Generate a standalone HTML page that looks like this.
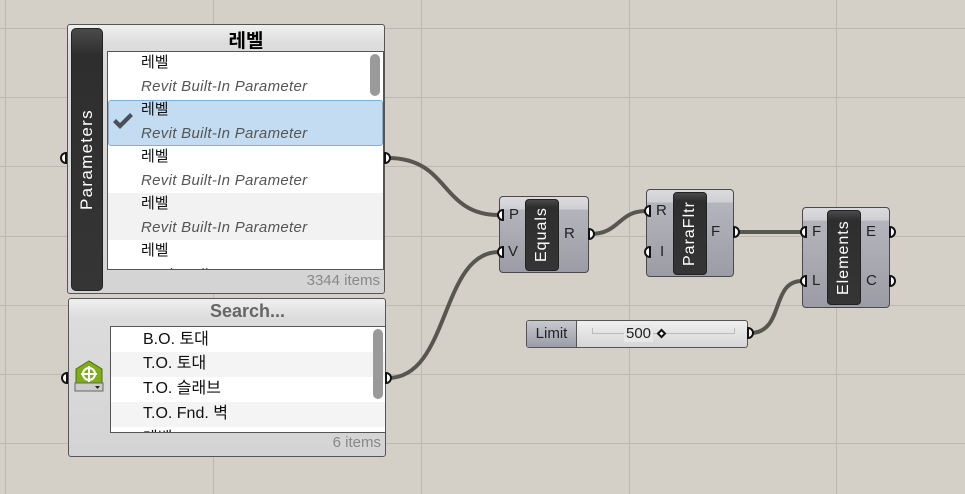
<!DOCTYPE html>
<html><head><meta charset="utf-8"><style>
*{margin:0;padding:0;box-sizing:border-box}
body{width:965px;height:494px;overflow:hidden;background:#d4d0c8;position:relative;font-family:"Liberation Sans","Noto Sans CJK KR",sans-serif}
.abs{position:absolute}
.comp{position:absolute;border:1px solid #4a4a4a;border-radius:4px;background:linear-gradient(#dcdce0 0,#d0d0d4 12px,#b4b4bc 13px,#9c9ca6 100%)}
.bar{position:absolute;background:linear-gradient(#4a4a4a,#2e2e2e 10%,#353535);border:1px solid #222;border-radius:4px}
.vt{position:absolute;left:0;top:0;width:100%;height:100%;display:flex;align-items:center;justify-content:center;writing-mode:vertical-rl;transform:rotate(180deg);color:#fff;font-size:16px;letter-spacing:1px}
.lbl{position:absolute;font-size:15px;color:#222}
.panel{position:absolute;border:1px solid #555;border-radius:3px;background:linear-gradient(#f0f0f0,#dcdcdc 20px,#d4d4d4)}
.list{position:absolute;background:#fff;border:1px solid #555;overflow:hidden}
.row{position:absolute;left:0;width:100%;font-size:15px;color:#111;line-height:24px}
.it{font-style:italic;color:#555;font-size:15px;letter-spacing:0.3px}
.sr{position:absolute;left:32px;font-size:16px;color:#111;line-height:25px}
</style></head><body>
<svg class="abs" style="left:0;top:0" width="965" height="494">
<g stroke="#bdb9b1" stroke-width="1">
<line x1="5.5" y1="0" x2="5.5" y2="494"/><line x1="213.5" y1="0" x2="213.5" y2="494"/><line x1="421.5" y1="0" x2="421.5" y2="494"/><line x1="629.5" y1="0" x2="629.5" y2="494"/><line x1="836.5" y1="0" x2="836.5" y2="494"/>
<line x1="0" y1="28.5" x2="965" y2="28.5"/><line x1="0" y1="97.5" x2="965" y2="97.5"/><line x1="0" y1="166.5" x2="965" y2="166.5"/><line x1="0" y1="236.5" x2="965" y2="236.5"/><line x1="0" y1="305.5" x2="965" y2="305.5"/><line x1="0" y1="374.5" x2="965" y2="374.5"/><line x1="0" y1="443.5" x2="965" y2="443.5"/>
</g>
<g stroke="#58574f" stroke-width="4" fill="none">
<path d="M388 158 C450 158 440 215 499 215"/>
<path d="M388 378 C450 378 440 252 499 252"/>
<path d="M590 234 C620 234 618 211 646 211"/>
<path d="M735 232 L802 232"/>
<path d="M750 333 C785 333 770 281 802 281"/>
</g>
</svg>

<div class="panel" style="left:67px;top:24px;width:318px;height:270px"></div>
<div class="bar" style="left:71px;top:28px;width:32px;height:263px;border-radius:5px"><div class="vt" style="font-size:17px;letter-spacing:1.3px">Parameters</div></div>
<div class="abs" style="left:108px;top:26px;width:276px;text-align:center;font-weight:bold;font-size:19px;color:#000">레벨</div>
<div class="list" style="left:107px;top:51px;width:277px;height:219px">
 <div class="row" style="top:0;height:47px;background:#fff"></div>
 <div class="row" style="top:48px;height:46px;background:#c3dcf1;border:1px solid #82b0d4;border-radius:3px"></div>
 <div class="row" style="top:94px;height:47px;background:#fff"></div>
 <div class="row" style="top:141px;height:47px;background:#f2f2f2"></div>
 <div class="row" style="top:188px;height:31px;background:#fff"></div>
 <div class="row" style="left:33px;top:-1px">레벨<br><span class="it">Revit Built-In Parameter</span></div>
 <div class="row" style="left:33px;top:46px">레벨<br><span class="it">Revit Built-In Parameter</span></div>
 <div class="row" style="left:33px;top:93px">레벨<br><span class="it">Revit Built-In Parameter</span></div>
 <div class="row" style="left:33px;top:140px">레벨<br><span class="it">Revit Built-In Parameter</span></div>
 <div class="row" style="left:33px;top:187px">레벨<br><span class="it">Revit Built-In Parameter</span></div>
 <div class="abs" style="left:262px;top:2px;width:10px;height:42px;background:#9a9a9a;border-radius:5px"></div>
 <svg class="abs" style="left:3px;top:60px" width="24" height="20"><path d="M2 10 L9 17 L22 4 L19 1 L9 11 L5 7 Z" fill="#4a4f58"/></svg>
</div>
<div class="abs" style="left:200px;top:272px;width:180px;text-align:right;font-size:15px;color:#888">3344 items</div>

<div class="panel" style="left:68px;top:298px;width:318px;height:159px"></div>
<div class="abs" style="left:110px;top:301px;width:275px;text-align:center;font-weight:bold;font-size:18px;color:#666">Search...</div>
<div class="list" style="left:110px;top:326px;width:276px;height:107px">
 <div class="row" style="top:25px;height:25px;background:#f4f4f4"></div>
 <div class="row" style="top:75px;height:25px;background:#f4f4f4"></div>
 <div class="sr" style="top:0px">B.O. 토대</div>
 <div class="sr" style="top:24px">T.O. 토대</div>
 <div class="sr" style="top:49px">T.O. 슬래브</div>
 <div class="sr" style="top:74px">T.O. Fnd. 벽</div>
 <div class="sr" style="top:99px">레벨</div>
 <div class="abs" style="left:262px;top:2px;width:10px;height:70px;background:#9a9a9a;border-radius:5px"></div>
</div>
<div class="abs" style="left:200px;top:434px;width:181px;text-align:right;font-size:15px;color:#888">6 items</div>
<svg class="abs" style="left:74px;top:359px" width="32" height="34">
<path d="M2 10 L15 2 L28 10 L28 24 L2 24 Z" fill="#7fae1a" stroke="#4d6e0c"/>
<circle cx="15" cy="15" r="6" fill="none" stroke="#fff" stroke-width="2"/>
<path d="M15 7 V23 M7 15 H23" stroke="#fff" stroke-width="2"/>
<rect x="1" y="24" width="28" height="8" fill="#ccc" stroke="#666"/>
<path d="M21 27 h5 l-2.5 3z" fill="#222"/>
</svg>

<div class="comp" style="left:499px;top:196px;width:90px;height:77px"></div>
<div class="bar" style="left:525px;top:199px;width:34px;height:72px"><div class="vt">Equals</div></div>
<div class="lbl" style="left:509px;top:206px">P</div>
<div class="lbl" style="left:508px;top:243px">V</div>
<div class="lbl" style="left:564px;top:225px">R</div>

<div class="comp" style="left:646px;top:189px;width:88px;height:88px"></div>
<div class="bar" style="left:673px;top:192px;width:34px;height:83px"><div class="vt">ParaFltr</div></div>
<div class="lbl" style="left:656px;top:202px">R</div>
<div class="lbl" style="left:660px;top:243px">I</div>
<div class="lbl" style="left:711px;top:223px">F</div>

<div class="comp" style="left:802px;top:207px;width:88px;height:101px"></div>
<div class="bar" style="left:827px;top:210px;width:34px;height:95px"><div class="vt">Elements</div></div>
<div class="lbl" style="left:812px;top:223px">F</div>
<div class="lbl" style="left:812px;top:272px">L</div>
<div class="lbl" style="left:866px;top:223px">E</div>
<div class="lbl" style="left:866px;top:272px">C</div>

<div class="abs" style="left:526px;top:320px;width:222px;height:28px;border:1px solid #555;border-radius:3px;background:linear-gradient(#f0f0f0,#d6d6d6);overflow:hidden">
 <div class="abs" style="left:0;top:0;width:50px;height:26px;background:linear-gradient(#c8c8d0,#9c9ca8);border-right:1px solid #555;font-size:15px;color:#222;text-align:center;line-height:26px">Limit</div>
 <div class="abs" style="left:65px;top:7px;width:143px;height:6px;border:1px solid #bbb;border-top:none"></div>
 <div class="abs" style="left:97px;top:4px;font-size:15px;color:#222;background:#e8e8e8;padding:0 2px">500</div>
 <div class="abs" style="left:131px;top:9px;width:7px;height:7px;border:2px solid #111;background:#fff;transform:rotate(45deg)"></div>
</div>

<svg class="abs" style="left:0;top:0;pointer-events:none" width="965" height="494">
<g fill="#fff" stroke="#111" stroke-width="2">
<path d="M66 153 A5 5 0 0 0 66 163 Z"/>
<path d="M385 153 A5 5 0 0 1 385 163 Z"/>
<path d="M67 373 A5 5 0 0 0 67 383 Z"/>
<path d="M386 373 A5 5 0 0 1 386 383 Z"/>
<path d="M503 210 A5 5 0 0 0 503 220 Z"/>
<path d="M503 247 A5 5 0 0 0 503 257 Z"/>
<path d="M589 229 A5 5 0 0 1 589 239 Z"/>
<path d="M650 206 A5 5 0 0 0 650 216 Z"/>
<path d="M650 247 A5 5 0 0 0 650 257 Z"/>
<path d="M734 227 A5 5 0 0 1 734 237 Z"/>
<path d="M806 227 A5 5 0 0 0 806 237 Z"/>
<path d="M806 276 A5 5 0 0 0 806 286 Z"/>
<path d="M890 227 A5 5 0 0 1 890 237 Z"/>
<path d="M890 276 A5 5 0 0 1 890 286 Z"/>
<path d="M748 328 A5 5 0 0 1 748 338 Z"/>
</g>
</svg>
</body></html>
